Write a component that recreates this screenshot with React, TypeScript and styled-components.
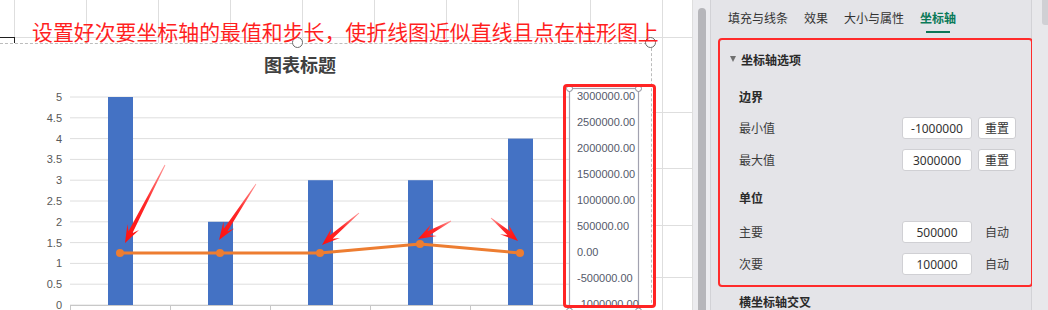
import styled, { createGlobalStyle } from "styled-components";

const GlobalStyle = createGlobalStyle`
  html, body {
    margin: 0;
    padding: 0;
  }
  body {
    width: 1048px;
    height: 310px;
    overflow: hidden;
    background: #ffffff;
    font-family: "Noto Sans", "Noto Sans CJK SC", sans-serif;
  }
`;

const COLS = [15, 72, 72, 72, 72, 72, 72, 72, 72, 72, 30];
const ROWS = [38, 75, 56, 57, 52, 40];

const BARS = [5, 2, 3, 3, 4];
const LINE = [
  [120, 253],
  [220, 253],
  [320, 253],
  [420, 244],
  [520, 253],
];
const ARROWS = [
  { from: [165, 165], to: [125, 243] },
  { from: [256, 184], to: [219, 240] },
  { from: [359, 213], to: [322, 245] },
  { from: [451, 221], to: [418, 239] },
  { from: [491, 218], to: [518, 241] },
];
const PRIMARY = [0, 0.5, 1, 1.5, 2, 2.5, 3, 3.5, 4, 4.5, 5];
const SECONDARY = [3000000, 2500000, 2000000, 1500000, 1000000, 500000, 0, -500000, -1000000];
const CATEGORIES = ["华北一部", "华东二部", "华南三部", "西南四部", "西北五部"];

const yP = (v: number) => 305 - v * 41.6;
const yS = (v: number) => 252 - (v / 500000) * 26;

function arrowPoints(from: number[], to: number[]) {
  const [tx, ty] = from;
  const [hx, hy] = to;
  const len = Math.hypot(hx - tx, hy - ty);
  const ux = (hx - tx) / len;
  const uy = (hy - ty) / len;
  const nx = -uy;
  const ny = ux;
  const p = (a: number, b: number) =>
    `${(hx - ux * a + nx * b).toFixed(1)},${(hy - uy * a + ny * b).toFixed(1)}`;
  return [
    `${(tx + nx * 0.4).toFixed(1)},${(ty + ny * 0.4).toFixed(1)}`,
    p(12, 2.2),
    p(18, 6.5),
    p(0, 0),
    p(18, -6.5),
    p(12, -2.2),
    `${(tx - nx * 0.4).toFixed(1)},${(ty - ny * 0.4).toFixed(1)}`,
  ].join(" ");
}

function Chart() {
  return (
    <svg width={662} height={267} viewBox="-10 43 662 267">
      <defs>
        {ARROWS.map((a, i) => (
          <linearGradient
            key={i}
            id={`arrow${i}`}
            gradientUnits="userSpaceOnUse"
            x1={a.from[0]}
            y1={a.from[1]}
            x2={a.to[0]}
            y2={a.to[1]}
          >
            <stop offset="0" stopColor="#ff9a9a" />
            <stop offset="0.45" stopColor="#ff2a2a" />
            <stop offset="1" stopColor="#ff1010" />
          </linearGradient>
        ))}
      </defs>

      <text
        x={300}
        y={72}
        textAnchor="middle"
        fontFamily="'Noto Sans CJK SC', sans-serif"
        fontSize={18}
        fontWeight={700}
        fill="#404040"
      >
        图表标题
      </text>

      {PRIMARY.map((v) => (
        <line key={`g${v}`} x1={70} x2={570} y1={yP(v)} y2={yP(v)} stroke="#dedede" strokeWidth={1} />
      ))}
      {PRIMARY.map((v) => (
        <text
          key={`l${v}`}
          x={62}
          y={yP(v) + 4}
          textAnchor="end"
          fontFamily="'Liberation Sans', sans-serif"
          fontSize={11}
          fill="#595959"
        >
          {v}
        </text>
      ))}

      {BARS.map((b, i) => (
        <rect key={`b${i}`} x={108 + i * 100} y={yP(b)} width={25} height={305 - yP(b)} fill="#4472c4" />
      ))}

      <line x1={70} x2={570} y1={305.5} y2={305.5} stroke="#c8c8c8" strokeWidth={1} />
      {[0, 1, 2, 3, 4, 5].map((i) => (
        <line key={`t${i}`} x1={70.5 + i * 100} x2={70.5 + i * 100} y1={305} y2={312} stroke="#c8c8c8" />
      ))}
      {CATEGORIES.map((c, i) => (
        <text
          key={`c${i}`}
          x={120 + i * 100}
          y={320}
          textAnchor="middle"
          fontFamily="'Noto Sans CJK SC', sans-serif"
          fontSize={10}
          fill="#595959"
        >
          {c}
        </text>
      ))}

      <polyline
        points={LINE.map((p) => p.join(",")).join(" ")}
        fill="none"
        stroke="#ed7d31"
        strokeWidth={3}
        strokeLinejoin="round"
      />
      {LINE.map(([x, y], i) => (
        <circle key={`m${i}`} cx={x} cy={y} r={4} fill="#ed7d31" />
      ))}

      {ARROWS.map((a, i) => (
        <polygon key={`a${i}`} points={arrowPoints(a.from, a.to)} fill={`url(#arrow${i})`} />
      ))}

      <rect x={569.5} y={88.5} width={69} height={240} fill="none" stroke="#a2a2b0" strokeWidth={1.2} />
      {SECONDARY.map((v) => (
        <text
          key={`s${v}`}
          x={577}
          y={yS(v) + 4}
          fontFamily="'Liberation Sans', sans-serif"
          fontSize={11}
          fill="#55596a"
        >
          {`${v}.00`}
        </text>
      ))}
      {[569.5, 638.5].map((x) => (
        <circle key={`h${x}`} cx={x} cy={88.5} r={3} fill="#ffffff" stroke="#8a8a96" strokeWidth={1} />
      ))}
      {[569.5, 638.5].map((x) => (
        <circle key={`hb${x}`} cx={x} cy={311} r={3} fill="#ffffff" stroke="#8a8a96" strokeWidth={1} />
      ))}
    </svg>
  );
}

function App() {
  return (
    <>
      <GlobalStyle />
      <Page>
        <Sheet>
          <Grid>
            {ROWS.map((_, r) => COLS.map((_, c) => <Cell key={`${r}-${c}`} />))}
          </Grid>
          <ActiveCell />
          <ChartFrame>
            <Chart />
          </ChartFrame>
          <Handle $x={298} />
          <Handle $x={651} />
          <AxisHighlight />
          <Annotation>设置好次要坐标轴的最值和步长，使折线图近似直线且点在柱形图上</Annotation>
        </Sheet>

        <Pane>
          <Gutter>
            <Thumb />
          </Gutter>
          <Content>
            <Tabs>
              <Tab>
                <span>填充与线条</span>
              </Tab>
              <Tab>
                <span>效果</span>
              </Tab>
              <Tab>
                <span>大小与属性</span>
              </Tab>
              <Tab $active>
                <span>坐标轴</span>
                <Underline />
              </Tab>
            </Tabs>

            <OptionsBox>
              <SectionHeader>
                <Caret />
                <span>坐标轴选项</span>
              </SectionHeader>

              <GroupTitle $gap={18}>边界</GroupTitle>
              <FieldRow $gap={4}>
                <FieldLabel>最小值</FieldLabel>
                <ValueBox>-1000000</ValueBox>
                <ResetButton>重置</ResetButton>
              </FieldRow>
              <FieldRow>
                <FieldLabel>最大值</FieldLabel>
                <ValueBox>3000000</ValueBox>
                <ResetButton>重置</ResetButton>
              </FieldRow>

              <GroupTitle $gap={13}>单位</GroupTitle>
              <FieldRow $gap={7}>
                <FieldLabel>主要</FieldLabel>
                <ValueBox>500000</ValueBox>
                <AutoText>自动</AutoText>
              </FieldRow>
              <FieldRow>
                <FieldLabel>次要</FieldLabel>
                <ValueBox>100000</ValueBox>
                <AutoText>自动</AutoText>
              </FieldRow>
            </OptionsBox>

            <NextSection>横坐标轴交叉</NextSection>
          </Content>
          <RightGutter>
            <SmallThumb />
          </RightGutter>
        </Pane>
      </Page>
    </>
  );
}

const Page = styled.div`
  display: flex;
  width: 1048px;
  height: 310px;
  overflow: hidden;
`;

const Sheet = styled.div`
  position: relative;
  width: 693px;
  height: 310px;
  overflow: hidden;
  background: #ffffff;
`;

const Grid = styled.div`
  display: grid;
  grid-template-columns: ${COLS.map((c) => `${c}px`).join(" ")};
  grid-template-rows: ${ROWS.map((r) => `${r}px`).join(" ")};
`;

const Cell = styled.div`
  box-sizing: border-box;
  border-right: 1px solid #dedede;
  border-bottom: 1px solid #dedede;
`;

const ActiveCell = styled.div`
  position: absolute;
  left: -20px;
  top: 37px;
  width: 35px;
  height: 30px;
  box-sizing: border-box;
  border: 1px solid #1f1f1f;
`;

const ChartFrame = styled.div`
  position: absolute;
  left: -10px;
  top: 43px;
  width: 662px;
  height: 280px;
  box-sizing: border-box;
  background: #ffffff;
  border-top: 1px dashed #bcbcbc;
  border-right: 1px dashed #bcbcbc;

  svg {
    display: block;
    margin-top: -1px;
  }
`;

const Handle = styled.div<{ $x: number }>`
  position: absolute;
  left: ${(p) => p.$x - 6}px;
  top: 37px;
  width: 9px;
  height: 9px;
  border-radius: 50%;
  border: 1.5px solid #6a6a6a;
  background: #ffffff;
`;

const AxisHighlight = styled.div`
  position: absolute;
  left: 563px;
  top: 84px;
  width: 93px;
  height: 224px;
  box-sizing: border-box;
  border: 3px solid #ff2424;
  border-radius: 4px;
`;

const Annotation = styled.div`
  position: absolute;
  left: 32px;
  top: 21px;
  font-family: "Noto Sans CJK SC", sans-serif;
  font-size: 20.9px;
  line-height: 1;
  color: #ff1f1f;
  white-space: nowrap;
`;

const Pane = styled.div`
  flex: 1;
  display: flex;
  height: 310px;
  background: #e8e8eb;
  color: #3a3a3a;
  font-size: 12px;
`;

const Gutter = styled.div`
  width: 17px;
  display: flex;
  justify-content: center;
  padding-top: 8px;
  box-sizing: border-box;
  background: #ececef;
`;

const Thumb = styled.div`
  width: 8px;
  height: 320px;
  border-radius: 4px;
  background: #b6b6ba;
`;

const Content = styled.div`
  width: 322px;
  box-sizing: border-box;
  border-left: 1px solid #d2d2d6;
  border-right: 1px solid #d2d2d6;
  background: #e4e4e8;
  display: flex;
  flex-direction: column;
`;

const Tabs = styled.div`
  display: flex;
  gap: 16px;
  height: 33px;
  padding-left: 17px;
`;

const Tab = styled.div<{ $active?: boolean }>`
  display: flex;
  flex-direction: column;
  align-items: center;
  padding-top: 9px;
  line-height: 20px;
  color: ${(p) => (p.$active ? "#0b7a59" : "#333333")};
  font-weight: ${(p) => (p.$active ? 700 : 400)};
`;

const Underline = styled.div`
  width: 24px;
  height: 2px;
  margin-top: 2px;
  background: #0e7556;
`;

const OptionsBox = styled.div`
  margin: 5px -2px 0 7px;
  padding-bottom: 5px;
  border: 2px solid #ff2b2b;
  border-radius: 4px;
  display: flex;
  flex-direction: column;
`;

const SectionHeader = styled.div`
  display: flex;
  align-items: center;
  gap: 5px;
  height: 20px;
  margin-top: 10px;
  padding-left: 10px;
  font-weight: 700;
  color: #2a2a2a;
`;

const Caret = styled.div`
  width: 0;
  height: 0;
  margin-top: -3px;
  border-left: 3.5px solid transparent;
  border-right: 3.5px solid transparent;
  border-top: 6px solid #707070;
`;

const GroupTitle = styled.div<{ $gap: number }>`
  height: 20px;
  line-height: 20px;
  margin-top: ${(p) => p.$gap}px;
  padding-left: 19px;
  font-weight: 700;
  color: #2a2a2a;
`;

const FieldRow = styled.div<{ $gap?: number }>`
  display: flex;
  align-items: center;
  gap: 6px;
  height: 32px;
  margin-top: ${(p) => p.$gap ?? 0}px;
  padding: 0 15px 0 19px;
`;

const FieldLabel = styled.span`
  flex: 1;
  color: #3c3c3c;
`;

const ValueBox = styled.div`
  width: 70px;
  height: 22px;
  box-sizing: border-box;
  display: flex;
  align-items: center;
  justify-content: center;
  background: #ffffff;
  border: 1px solid #d0d0d4;
  border-radius: 3px;
  color: #333333;
`;

const ResetButton = styled.div`
  width: 38px;
  height: 22px;
  box-sizing: border-box;
  display: flex;
  align-items: center;
  justify-content: center;
  background: #ffffff;
  border: 1px solid #cdcdd1;
  border-radius: 3px;
  color: #333333;
`;

const AutoText = styled.span`
  width: 38px;
  text-align: center;
  color: #3c3c3c;
`;

const NextSection = styled.div`
  height: 20px;
  line-height: 20px;
  margin-top: 6px;
  padding-left: 28px;
  font-weight: 700;
  color: #2a2a2a;
`;

const RightGutter = styled.div`
  flex: 1;
  display: flex;
  justify-content: flex-end;
  background: #e8e8eb;
`;

const SmallThumb = styled.div`
  width: 6px;
  height: 25px;
  border-radius: 0 0 0 3px;
  background: #d0d0d4;
`;

export default App;
